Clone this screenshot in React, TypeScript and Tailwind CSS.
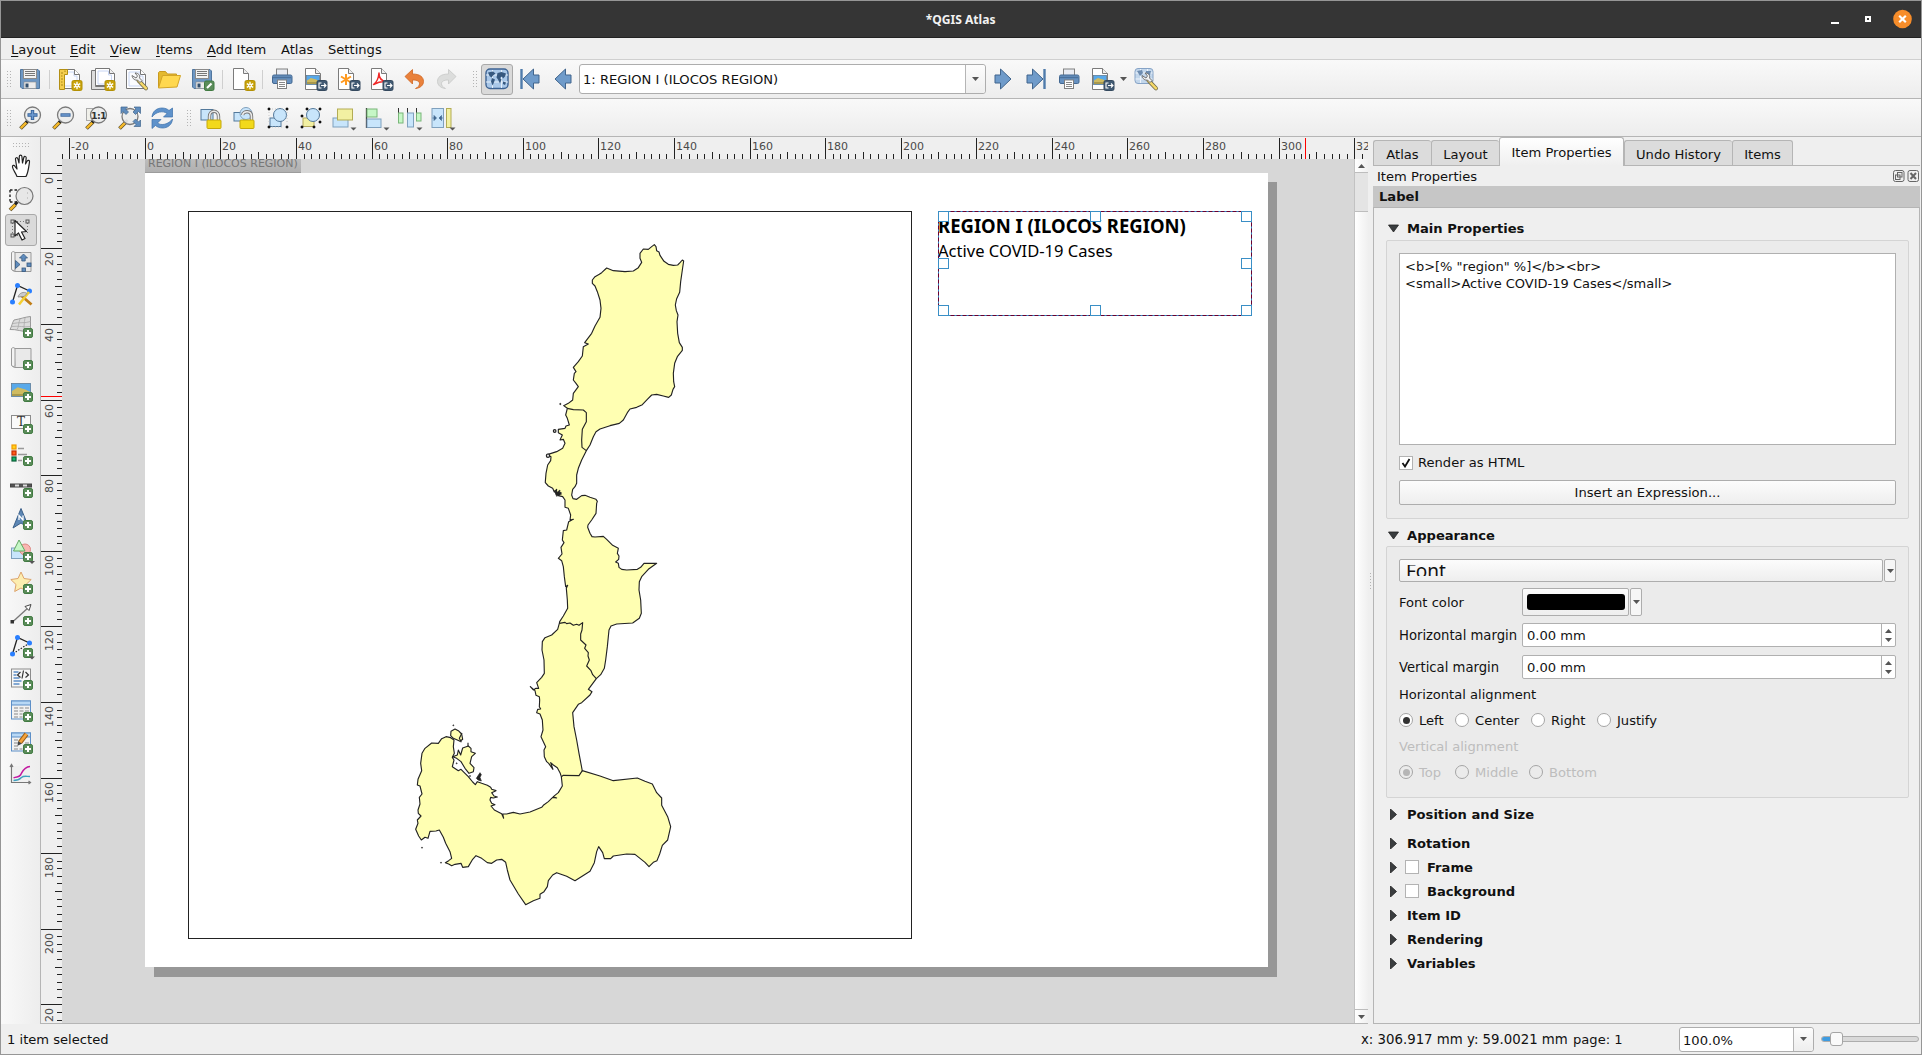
import type { ReactNode } from "react";

/* ---------- icon building blocks ---------- */

const Svg = ({ children, size = 24 }: { children: ReactNode; size?: number }) => (
  <svg width={size} height={size} viewBox="0 0 24 24" fill="none" className="block shrink-0 overflow-visible">
    {children}
  </svg>
);

const AddBadge = () => (
  <g>
    <rect x="14.500" y="14.500" width="9" height="9" rx="1.600" fill="#5b8c5a" stroke="#3f7a40" />
    <path d="M19 16v6M16 19h6" stroke="#fff" strokeWidth="2" />
  </g>
);
const StarBadge = () => (
  <g>
    <rect x="14" y="13.500" width="10" height="10" rx="1.600" fill="#c8a30a" stroke="#b39004" />
    <path d="M19 14.800v7.400M15.800 16.600l6.400 3.800M22.200 16.600l-6.400 3.800" stroke="#fff" strokeWidth="1.300" />
    <circle cx="19" cy="18.500" r="1.900" fill="#fff" />
    <circle cx="19" cy="18.500" r="0.800" fill="#c8a30a" />
  </g>
);
const ExportBadge = () => (
  <g>
    <rect x="14" y="13.500" width="10" height="10" rx="1.600" fill="#415a73" stroke="#34495e" />
    <path d="M18.500 16h-2.500v5h2.500M18 18.500h5M21 16.500l2 2-2 2" stroke="#fff" strokeWidth="1.100" />
  </g>
);
const Sheet = () => (
  <g>
    <path d="M2.500 1.500h10l5 5v16h-15z" fill="#fff" stroke="#7b7b7b" />
    <path d="M12.500 1.500v5h5" fill="#eee" stroke="#7b7b7b" />
  </g>
);
const Frame = () => (
  <g>
    <path d="M2.500 2.500h14l5 5v14h-19z" fill="#fff" stroke="#777" />
    <path d="M5 5h11v4h3v10H5z" fill="#fbfcff" stroke="#c8d6f4" />
    <path d="M16.500 2.500v5h5" fill="#fff" stroke="#777" />
  </g>
);
const Floppy = () => (
  <g>
    <path d="M2.500 2.500h17.500l1.500 1.500v17.500h-17.500l-1.500-1.500z" fill="#6d97c4" stroke="#51779f" />
    <rect x="5.500" y="2.500" width="13" height="9" fill="#f2f2f2" stroke="#8a8a8a" />
    <path d="M7 4.500h10M7 6.500h10M7 8.500h10" stroke="#777" />
    <rect x="6" y="15" width="12" height="6.500" fill="#ececec" stroke="#8a8a8a" strokeWidth=".6" />
    <rect x="7.500" y="16.500" width="3" height="4" fill="#34506e" />
  </g>
);
const Wrench = () => (
  <g>
    <path d="M14.500 13.500l7.500 7.800" stroke="#6f6a4c" strokeWidth="4" strokeLinecap="round" />
    <path d="M14.500 13.500l7.500 7.800" stroke="#f6d968" strokeWidth="2.500" strokeLinecap="round" />
    <path d="M8 8.500c.5 3.500 3 5 5.500 4.500l2.500 2.500 2-2-2.500-2.500c.8-2.500-.8-5-4.500-5l2.500 3-1.500 2z" fill="#f1f1f1" stroke="#666" strokeWidth=".9" />
  </g>
);
const Printer = () => (
  <g>
    <rect x="6.500" y="2" width="11" height="7" fill="#e9ecf3" stroke="#808080" />
    <rect x="2.500" y="8" width="19.500" height="8.500" rx="1.500" fill="#6791c0" stroke="#436892" />
    <path d="M3 10.500h18" stroke="#4a719d" strokeWidth="1.500" />
    <rect x="7.500" y="13" width="9" height="8.500" fill="#fff" stroke="#808080" />
    <path d="M9 15.500h6M9 17.500h6M9 19.500h6" stroke="#888" />
  </g>
);
const Picture = ({ x = 2, y = 7, w = 17, h = 11 }: { x?: number; y?: number; w?: number; h?: number }) => (
  <g>
    <rect x={x + 0.5} y={y + 0.5} width={w} height={h} fill="#58a9ea" stroke="#5d7d99" strokeWidth=".8" />
    <path
      d={`M${x + 1} ${y + h * 0.62}l${w * 0.3} ${-h * 0.3}l${w * 0.4} ${h * 0.18}l${w * 0.27} ${h * 0.2}v${h * 0.3}h${-w * 0.97}z`}
      fill="#cfbb60"
    />
    <path d={`M${x + 1} ${y + h - 1}h${w - 1}`} stroke="#8f8440" strokeWidth="1.200" />
  </g>
);
const Lens = ({ cx = 14.5, cy = 9 }: { cx?: number; cy?: number }) => (
  <g>
    <path d="M2.500 22.500l7-7" stroke="#54492b" strokeWidth="3.800" />
    <path d="M2.800 22.200l6-6" stroke="#f6b929" strokeWidth="2.400" />
    <path d="M8 16.500l2.500-2.500" stroke="#222" strokeWidth="3" />
    <circle cx={cx} cy={cy} r="8" fill="#eceded" fillOpacity=".92" stroke="#7a7a7a" strokeWidth="1.300" />
  </g>
);
const Roll = () => (
  <g>
    <path d="M5 2.500h17v19H6z" fill="#e9e9e9" stroke="#999" />
    <path d="M2.500 2.500c1.500-1.500 3.500-1 3.500.5v16c0 2-3.500 2-3.500 0z" fill="#f3f3f3" stroke="#999" />
    <path d="M3 19.500c1 2 3 2 5 2" stroke="#999" />
  </g>
);
const NodeLines = ({ dashed = true }: { dashed?: boolean }) => (
  <g>
    <path d="M3.500 20L8.500 3.500L20.500 9" stroke="#222" strokeWidth="1.300" />
    {dashed && <path d="M20.500 9L3.500 20" stroke="#222" strokeWidth="1.200" strokeDasharray="1.500 1.500" />}
    <circle cx="8.500" cy="3.500" r="2.500" fill="#2a7fff" />
    <circle cx="20.500" cy="9" r="2.500" fill="#2a7fff" />
    <circle cx="3.500" cy="20" r="2.500" fill="#2a7fff" />
  </g>
);
const MenuTick = ({ x = 23, y = 22.5 }: { x?: number; y?: number }) => (
  <path d={`M${x - 3} ${y - 1}h6l-3 3z`} fill="#555" />
);
const Globe = () => (
  <g>
    <rect x="1" y="2" width="22" height="19.500" rx="4" fill="#a9c7e8" stroke="#3c6292" strokeWidth="1.400" />
    <path d="M1 8h22M1 15h22M7.500 3v18M16.500 3v18" stroke="#e4effa" strokeWidth="1" />
    <path
      d="M3 5.500l5-1 2.500 2-2.500 2-1.500 2-2-1.500zM7 11l3 1.500-1.500 4-1 2-1.500-4zM12.500 6l4-1 4.500 1.500-1 3-2 2-1-2-2 1.500 1.500 1.500-1.500 4-2-4-1.500-2zM18 14.500l3 1-1 2.500-2-1z"
      fill="#36587f"
    />
  </g>
);
const ArrowL = () => <path d="M2 12L12.500 2v6h5.500v8h-5.500v6z" fill="#6f9bca" stroke="#41658d" strokeLinejoin="round" />;

const icons: Record<string, ReactNode> = {
  save: <Floppy />,
  newLayout: (
    <g>
      <Frame />
      <path d="M1.500 2.500h8v5H6.500v15h-5z" fill="#f4cd4d" stroke="#b38f14" />
      <path d="M3 6h2M3 9h1.500M3 12h2M3 15h1.500M3 18h2M7 3.500v1.500" stroke="#98770c" strokeWidth=".8" />
      <StarBadge />
    </g>
  ),
  duplicate: (
    <g>
      <path d="M.5 3.500h4v16h12v3H.5z" fill="#ddd" stroke="#777" />
      <path d="M4.500 1.500h14l5 5v12h-19z" fill="#fff" stroke="#777" />
      <path d="M7 4h10.500v4h3v9H7z" stroke="#c8d6f4" />
      <path d="M18.500 1.500v5h5" fill="#eee" stroke="#777" />
      <StarBadge />
    </g>
  ),
  manager: (
    <g>
      <Frame />
      <Wrench />
    </g>
  ),
  open: (
    <g>
      <path d="M1.500 20.500v-15l1-1h6l2 2.500h9v4" fill="#e4b92e" stroke="#c99a20" />
      <path d="M1.500 21L5.500 8.500H23.500L20 20z" fill="#ffd84f" stroke="#d3a527" strokeLinejoin="round" />
    </g>
  ),
  saveAs: (
    <g>
      <Floppy />
      <rect x="14.500" y="14" width="9.500" height="9.500" rx="1.600" fill="#5b8c5a" stroke="#3f7a40" />
      <path d="M17 21l4.500-4.500" stroke="#fff" strokeWidth="2.200" />
    </g>
  ),
  addPage: (
    <g>
      <Sheet />
      <StarBadge />
    </g>
  ),
  print: <Printer />,
  exportImage: (
    <g>
      <Sheet />
      <Picture x={3} y={8} w={13} h={9} />
      <ExportBadge />
    </g>
  ),
  exportSvg: (
    <g>
      <Sheet />
      <path d="M10 7v11M5 9.500l10 6M15 9.500l-10 6" stroke="#ff9a1f" strokeWidth="2" />
      <ExportBadge />
    </g>
  ),
  exportPdf: (
    <g>
      <Sheet />
      <path d="M4.500 17.500c3-2 5-6 5.500-11.500 0 6 2.500 8 7 8.500-5-.5-8 .5-12.500 3z" stroke="#f02a2a" strokeWidth="1.500" strokeLinejoin="round" />
      <ExportBadge />
    </g>
  ),
  undo: <path d="M3 9.500L10.500 2.500v4.500c8 0 11 3.500 11 7.500 0 3.500-3 6.500-8 7 3-1.500 4-3 4-4.800 0-2.200-2-3.700-7-3.700v4z" fill="#e9813b" stroke="#cf6420" strokeWidth=".8" />,
  redo: <path d="M21 9.500L13.500 2.500v4.500c-8 0-11 3.500-11 7.500 0 3.500 3 6.500 8 7-3-1.500-4-3-4-4.800 0-2.200 2-3.700 7-3.700v4z" fill="#dcdddc" stroke="#c6c8c6" strokeWidth=".8" />,
  globe: <Globe />,
  first: (
    <g transform="translate(3 0)">
      <path d="M.5 2v20" stroke="#4f7bab" strokeWidth="2.400" />
      <ArrowL />
    </g>
  ),
  prev: (
    <g transform="translate(2 0)">
      <ArrowL />
    </g>
  ),
  next: (
    <g transform="translate(22 0) scale(-1 1)">
      <ArrowL />
    </g>
  ),
  last: (
    <g transform="translate(21 0) scale(-1 1)">
      <path d="M.5 2v20" stroke="#4f7bab" strokeWidth="2.400" />
      <ArrowL />
    </g>
  ),
  atlasSettings: (
    <g>
      <rect x="1" y="1.500" width="18" height="15" rx="3" fill="#c3d7ec" stroke="#86a3c6" />
      <path d="M1.500 6h17M1.500 12h17M6.500 2v14M13.500 2v14" stroke="#eef4fb" />
      <path d="M3 4l5-1 1 3-3 3zM12 4l5 0-1 4-4 0z" fill="#6d8cb0" />
      <Wrench />
    </g>
  ),
  zoomIn: (
    <g>
      <Lens />
      <path d="M14.500 4v10M9.500 9h10" stroke="#33609a" strokeWidth="3.400" />
      <path d="M14.500 4.800v8.400M10.300 9h8.400" stroke="#6f9bd0" strokeWidth="1.600" />
    </g>
  ),
  zoomOut: (
    <g>
      <Lens />
      <path d="M9.500 9h10" stroke="#33609a" strokeWidth="3.400" />
      <path d="M10.300 9h8.400" stroke="#6f9bd0" strokeWidth="1.600" />
    </g>
  ),
  zoomActual: (
    <g>
      <rect x="2.500" y="2.500" width="12" height="12" fill="#f0f0ea" stroke="#aaa" />
      <Lens />
      <text x="14.500" y="12.600" fontSize="9.500" fontWeight="700" fill="#333" textAnchor="middle" fontFamily="DejaVu Sans, sans-serif" letterSpacing="-.7">
        1:1
      </text>
    </g>
  ),
  zoomFull: (
    <g>
      <Lens cx={13} cy={10.5} />
      <path d="M4 1h6.500l-2 2 3 3-2.500 2.500-3-3-2 2zM23.500 1v6.500l-2-2-3 3L16 6l3-3-2-2zM23.500 20.500h-6.500l2-2-3-3 2.500-2.500 3 3 2-2z" fill="#5f8cbd" stroke="#41658d" strokeWidth=".7" />
    </g>
  ),
  refresh: (
    <g fill="#5e92cb" stroke="#3a6ea9" strokeWidth=".7">
      <path d="M2 11C2.500 5 7 2 12 2c3 0 5.500 1 7 2.500L22.500 2v9h-9l3.500-3.500C13.500 4.500 6 5.500 2 11z" />
      <path d="M22.500 13c-.5 6-5 9-10 9-3 0-5.500-1-7-2.500L2 22.500v-9h9L7.500 17c3.500 3 11 1.500 15-4z" />
    </g>
  ),
  lock: (
    <g>
      <rect x="1" y="3.500" width="12" height="10.500" fill="#c8e5fb" stroke="#53799b" />
      <path d="M9.500 14.500v-4c0-7 9-7 9 0v4" stroke="#777" strokeWidth="3.400" />
      <path d="M9.500 14.500v-4c0-7 9-7 9 0v4" stroke="#eaeaea" strokeWidth="1.600" />
      <rect x="7" y="14" width="14" height="8.500" rx="1" fill="#f2d91b" stroke="#c4a80d" />
    </g>
  ),
  unlock: (
    <g>
      <rect x="1" y="6.500" width="10" height="8.500" fill="#c8e5fb" stroke="#53799b" />
      <circle cx="13" cy="7.500" r="6" fill="#c8e5fb" stroke="#7fa0bd" />
      <path d="M18.500 14.500v-4c0-6-8-6-9-1.500" stroke="#777" strokeWidth="3.400" />
      <path d="M18.500 14.500v-4c0-6-8-6-9-1.500" stroke="#eaeaea" strokeWidth="1.600" />
      <rect x="7" y="14" width="14" height="8.500" rx="1" fill="#f2d91b" stroke="#c4a80d" />
    </g>
  ),
  group: (
    <g>
      <rect x="4" y="12" width="11" height="8.500" fill="#c8e5fb" stroke="#53799b" />
      <circle cx="14" cy="9" r="6.500" fill="#c8e5fb" stroke="#53799b" />
      <path d="M2 2h2v2H2zM20 2h2v2h-2zM2 20h2v2H2zM20 20h2v2h-2z" fill="#111" stroke="#111" strokeWidth=".6" />
      <path d="M6 3h12M3 6v12M21 6v12M6 21h12" stroke="#bbb" strokeWidth=".8" strokeDasharray="1 2" />
    </g>
  ),
  ungroup: (
    <g>
      <rect x="4" y="12" width="11" height="8.500" fill="#f2f0a2" stroke="#b3a85e" />
      <circle cx="14" cy="9" r="6.500" fill="#c8e5fb" stroke="#53799b" />
      <path d="M7 2h2v2H7zM20 2h2v2h-2zM2 9h2v2H2zM2 20h2v2H2zM14 20h2v2h-2zM20 15h2v2h-2z" fill="#111" stroke="#111" strokeWidth=".6" />
    </g>
  ),
  raise: (
    <g>
      <rect x="1" y="12" width="15" height="9" fill="#c8e5fb" stroke="#7fa0bd" />
      <rect x="5.500" y="3" width="15" height="11" fill="#f2f0a2" stroke="#b3ac55" />
      <MenuTick x={21.5} />
    </g>
  ),
  align: (
    <g>
      <path d="M1.500 2v20" stroke="#333" strokeWidth="1.300" />
      <rect x="2" y="3" width="10" height="8" fill="#c6f7c6" stroke="#79b679" />
      <rect x="2" y="13" width="14" height="8.500" fill="#c8e5fb" stroke="#7fa0bd" />
      <MenuTick x={21.5} />
    </g>
  ),
  distribute: (
    <g>
      <path d="M.5 2v5M9.500 2v5M18.500 2v5" stroke="#333" />
      <rect x=".5" y="7" width="4.500" height="10" fill="#c6f7c6" stroke="#79b679" />
      <rect x="9.500" y="7" width="6" height="14" fill="#c8e5fb" stroke="#7fa0bd" />
      <rect x="18.500" y="7" width="4.500" height="8" fill="#c6f7c6" stroke="#79b679" />
      <MenuTick x={21.5} />
    </g>
  ),
  resize: (
    <g>
      <rect x="1" y="2.500" width="11.500" height="19" fill="#c8e5fb" stroke="#7fa0bd" />
      <path d="M1.500 12h3M12 12H9M3 9.500L5.500 12 3 14.500zM10.500 9.500L8 12l2.500 2.500z" fill="#42688f" stroke="#42688f" strokeWidth=".7" />
      <rect x="15.500" y="2.500" width="4.500" height="19" fill="#f2f0a2" stroke="#b3ac55" />
      <MenuTick x={21.5} />
    </g>
  ),
  pan: (
    <path
      d="M8 22.500c-1.500-4-4-6.500-4.500-9.500-.3-1.700 1.500-2.300 2.500-.7l2 2.700L6.500 5.500c-.4-2 1.800-2.500 2.400-.6L10 9l.3-6.500c.1-1.800 2.400-1.800 2.600 0L13.500 9l1.300-5.500c.5-1.600 2.600-1.300 2.400.5L16.500 10l1.700-3c.8-1.300 2.600-.6 2.300 1-.7 4-1 10-3.500 14.500z"
      fill="#fff"
      stroke="#222"
      strokeWidth="1.200"
      strokeLinejoin="round"
    />
  ),
  zoomTool: (
    <g>
      <path d="M1 4h10M1 16h8M1 4v12" stroke="#222" strokeWidth="1.400" strokeDasharray="2.500 2" />
      <path d="M1 24l5.500-5.500" stroke="#54492b" strokeWidth="3.800" />
      <path d="M1.300 23.700l5-5" stroke="#f6b929" strokeWidth="2.400" />
      <path d="M6 18.500l2.500-2.500" stroke="#222" strokeWidth="2.800" />
      <circle cx="15.500" cy="10" r="8.500" fill="#e6e6e6" fillOpacity=".95" stroke="#777" strokeWidth="1.200" />
      <path d="M18 7h2M18 12h2" stroke="#aaa" strokeDasharray="1 1" />
    </g>
  ),
  select: (
    <g>
      <path d="M5 3.500h12M3.500 5v11M5 17.500h12M18.500 5v11" stroke="#777" strokeDasharray="1 2" />
      <rect x="2" y="2" width="3" height="3" stroke="#555" />
      <rect x="17" y="2" width="3" height="3" stroke="#555" />
      <rect x="2" y="16" width="3" height="3" stroke="#555" />
      <path d="M6 2.500v15.500l3.500-3 3.500 7 3-1.500-3.500-6.500 5-.5z" fill="#fff" stroke="#222" strokeWidth="1.200" strokeLinejoin="round" />
    </g>
  ),
  moveContent: (
    <g>
      <Roll />
      <g fill="#5f8cbd" stroke="#36587f" strokeWidth=".8">
        <path d="M14.500 4l4 4h-2.300v3h-3.400V8h-2.300z" />
        <path d="M6.500 10.500l4.500 4-4.500 4z" />
        <rect x="18" y="13" width="4" height="3.500" />
        <rect x="13" y="18" width="3.500" height="3.500" />
      </g>
    </g>
  ),
  editNodes: (
    <g>
      <NodeLines dashed={false} />
      <path d="M11 12.500l11.500 10" stroke="#c07d16" strokeWidth="2.800" />
      <path d="M20 10L10 22.500" stroke="#f4cf31" strokeWidth="2.500" />
      <path d="M9 15c1-4 6-6 9-3.500l-3 3z" fill="#ccc" stroke="#888" strokeWidth=".8" />
    </g>
  ),
  map3d: (
    <g>
      <path d="M5 6C11 5 16 3 21.500 2.500v15.500C14 18 7 15 1 15.500 3 12 3 9 5 6z" fill="#dcdcdc" stroke="#999" />
      <path d="M11 5c-2 5-1 8-3 10.500M16 4c-1 5-1 9-1 13M4 9.500c6-1.500 12 0 17.500-2M3 12.500c7-1 12 1 18.500 0" stroke="#aaa" strokeWidth=".8" />
      <AddBadge />
    </g>
  ),
  addMap: (
    <g>
      <Roll />
      <AddBadge />
    </g>
  ),
  addPicture: (
    <g>
      <Picture x={2} y={5} w={19} h={13} />
      <AddBadge />
    </g>
  ),
  addLabel: (
    <g>
      <rect x="2.500" y="5.500" width="19" height="13" fill="#fafafa" stroke="#8c8c8c" />
      <text x="12" y="16.200" fontSize="12" fontFamily="DejaVu Serif, serif" fill="#333" textAnchor="middle">
        T
      </text>
      <AddBadge />
    </g>
  ),
  addLegend: (
    <g>
      <path d="M9 6.500h6M9 12.500h9M9 18.500h4" stroke="#999" strokeWidth="1.600" />
      <rect x="3" y="3" width="4" height="4" fill="#ffd21c" stroke="#f29a00" strokeWidth="1.200" />
      <rect x="3" y="9" width="4" height="4" fill="#ff5a1c" stroke="#c32e00" strokeWidth="1.200" />
      <rect x="3" y="15" width="4" height="4" fill="#12b86b" stroke="#0b5c36" strokeWidth="1.200" />
      <AddBadge />
    </g>
  ),
  addScale: (
    <g>
      <rect x="1.500" y="10" width="21" height="3" fill="#555" stroke="#444" />
      <path d="M6 11.500h4M14 11.500h4" stroke="#ddd" strokeWidth="1.800" />
      <AddBadge />
    </g>
  ),
  addNorth: (
    <g>
      <path d="M12 2.500L20 22l-8-5-8 5z" fill="#5d87b5" stroke="#3a5f88" />
      <path d="M10 14V9.500l4 4.500V9.500" stroke="#fff" strokeWidth="1.300" />
      <AddBadge />
    </g>
  ),
  addShape: (
    <g>
      <rect x="2.500" y="10" width="15" height="10.500" fill="#c8e5fb" stroke="#7fa0bd" />
      <circle cx="16" cy="11.500" r="5.500" fill="#f9b7b2" stroke="#dd8883" />
      <path d="M10 2l6 11H4.500z" fill="#c6f7c6" stroke="#63a863" />
      <AddBadge />
      <MenuTick x={23} y={24} />
    </g>
  ),
  addMarker: (
    <g>
      <path d="M12 2l3 6.500 7.200 1-5.200 5 1.300 7L12 18l-6.300 3.500 1.300-7-5.200-5 7.200-1z" fill="#fdeeb0" stroke="#dda36a" strokeLinejoin="round" />
      <AddBadge />
    </g>
  ),
  addArrow: (
    <g>
      <path d="M3.500 20L20 5" stroke="#777" strokeWidth="1.300" />
      <rect x="2" y="18.500" width="2.500" height="2.500" fill="#333" stroke="#333" />
      <path d="M22 2.500l-2 6-4-4z" fill="#fff" stroke="#444" />
      <AddBadge />
    </g>
  ),
  addNode: (
    <g>
      <NodeLines />
      <AddBadge />
      <MenuTick x={23} y={23.5} />
    </g>
  ),
  addHtml: (
    <g>
      <rect x="2.500" y="3" width="19" height="18" fill="#f7f7f7" stroke="#8c8c8c" />
      <path d="M4.500 6h5M4.500 9h3M4.500 12h6M4.500 15h8M4.500 18h6" stroke="#5d8fc7" strokeWidth="1.400" />
      <path d="M11.500 6L8.500 9l3 2.500M14.500 4.500l-1.500 8M16.500 6l3 3-3 2.500" stroke="#333" strokeWidth="1.200" />
      <AddBadge />
    </g>
  ),
  addTable: (
    <g>
      <rect x="2.500" y="3" width="19" height="18" fill="#f2f2f2" stroke="#5d8fc7" />
      <rect x="2.500" y="3" width="19" height="4" fill="#b8d8f5" stroke="#5d8fc7" />
      <path d="M5 10h4M10.500 10h4M16 10h4M5 13h4M10.500 13h4M16 13h4M5 16h4M10.500 16h3M5 19h4M10.500 19h3" stroke="#888" />
      <AddBadge />
    </g>
  ),
  addFixedTable: (
    <g>
      <rect x="2.500" y="3" width="19" height="18" fill="#f2f2f2" stroke="#5d8fc7" />
      <rect x="2.500" y="3" width="19" height="4" fill="#b8d8f5" stroke="#5d8fc7" />
      <path d="M5 10h4M5 13h4M5 16h4M5 19h4M10.500 19h3M16 13h4" stroke="#888" />
      <path d="M17.500 4L11 12.500" stroke="#9a5d16" strokeWidth="4.600" />
      <path d="M17.500 4L11 12.500" stroke="#f5a33b" strokeWidth="2.800" />
      <path d="M9.200 11l3.600 2.800-4.300 2z" fill="#444" />
      <AddBadge />
    </g>
  ),
  elevation: (
    <g>
      <rect x="4" y="4" width="17" height="16" fill="#f0f0f0" />
      <path d="M2.500 3v17.500H21M1 5l1.500-2.500L4 5M19.500 19l2 1.500-2 1.500" stroke="#777" strokeWidth="1.200" />
      <path d="M4.500 16c3-2 5 0 7-3s3-8 9.500-8.500" stroke="#c217a0" strokeWidth="1.500" />
      <path d="M4.500 18.500c4 0 6-1 8-3s5-1 8.500-1" stroke="#3fa0bf" strokeWidth="1.400" />
    </g>
  ),
};

const IconBtn = ({ name }: { name: string }) => (
  <div className="flex w-[33px] shrink-0 items-center justify-center">
    <Svg>{icons[name]}</Svg>
  </div>
);

const Handle = () => (
  <div className="h-[18px] w-[5px] shrink-0 bg-[radial-gradient(circle,#b4b4b4_0.7px,transparent_1px)] bg-[length:3px_3px]" />
);
const Sep = ({ wide = "w-[7px]" }: { wide?: string }) => (
  <div className={`flex h-[19px] shrink-0 justify-center ${wide}`}>
    <div className="w-px bg-[#cfcfcf]" />
  </div>
);
const Caret = ({ up = false }: { up?: boolean }) => (
  <svg width="7" height="4" viewBox="0 0 7 4" className="block">
    <path d={up ? "M0 4h7L3.500 0z" : "M0 0h7L3.500 4z"} fill="#555" />
  </svg>
);

/* ---------- rulers ---------- */

const MM = 3.7795;

const HRuler = () => {
  const ticks: number[] = [];
  for (let mm = -22; mm <= 322; mm += 2) ticks.push(mm);
  return (
    <svg width="1327" height="22" className="block">
      {ticks.map((mm) => {
        const x = Math.floor(104.3 + mm * MM) + 0.5;
        const major = mm % 20 === 0;
        const y = major ? 1 : mm % 10 === 0 ? 15 : 17;
        return (
          <g key={mm}>
            <path d={`M${x} ${y}V22`} stroke="#222" />
            {major && (
              <text x={x + 1.5} y="12.800" fontSize="11" fill="#4a4a4a">
                {mm}
              </text>
            )}
          </g>
        );
      })}
      <path d="M1264.500 1V22" stroke="#f00" />
    </svg>
  );
};

const VRuler = () => {
  const ticks: number[] = [];
  for (let mm = -2; mm <= 224; mm += 2) ticks.push(mm);
  return (
    <svg width="21" height="864" className="block shrink-0">
      {ticks.map((mm) => {
        const y = Math.floor(14.4 + mm * MM) + 0.5;
        const major = mm % 20 === 0;
        const x = major ? 0 : mm % 10 === 0 ? 14 : 16;
        return (
          <g key={mm}>
            <path d={`M${x} ${y}H21`} stroke="#222" />
            {major && (
              <text x="12" y={y + 3.5} fontSize="11" fill="#4a4a4a" textAnchor="end" transform={`rotate(-90 12 ${y + 3.5})`}>
                {mm}
              </text>
            )}
          </g>
        );
      })}
      <path d="M0 237.500H21" stroke="#f00" />
    </svg>
  );
};

/* ---------- map of the region ---------- */

const shift = (pts: string, dx: number, dy: number) =>
  pts
    .trim()
    .split(/\s+/)
    .map((p) => {
      const [x, y] = p.split(",").map(Number);
      return `${x + dx},${y + dy}`;
    })
    .join(" ");

const outline = [
  shift(
    "433,44 438,50 440,62 447,66 450,76 462,94 475,103 490,106 503,105 510,98 517,90 521,93 517,120 512,155 509,187 500,206 496,225 499,242 504,255 501,275 503,310 508,338 517,352 517,361 502,380 494,400 490,430 491,455 494,470 489,478 484,495 476,502 460,498 440,493 425,495 412,508 397,524 380,532 360,537 352,548 340,570 328,580 300,587 270,597 258,605 250,620 240,645 229,662 215,690 205,715 200,735 200,760 195,770 188,778 185,795 189,806 200,808 215,797 225,796 240,802 258,808 262,814",
    0,
    0,
  ),
  shift(
    "260,100 258,130 245,150 234,165 233,172 240,190 246,200 255,201 280,199 290,208 308,226 325,235 322,250 327,258 326,268 317,276 325,280 327,292 335,298 350,300 382,298 392,292 402,280 440,280 415,298 395,320 388,335 387,360 392,390 394,430 388,445 368,459 320,462 303,468 297,480 292,530 287,570 283,595 272,614 259,626 235,658 246,665 240,675 215,698 205,703 188,728 192,770 200,810 207,850 217,903",
    0,
    720,
  ),
  shift(
    "547,212 600,228 640,242 712,234 735,244 757,252 770,278 785,294 785,316 803,350 812,380 803,420 787,436 779,462 771,482 760,487 747,500 735,487 705,463 680,462 640,468 632,476 613,476 608,458 596,440 590,455 583,488 570,514 525,542 500,529 470,518 458,525 445,542 442,560 432,575 420,583 420,595 400,602 377,614 355,582 330,540 322,510 317,487 305,478 290,480 275,490 262,488 245,475 228,467 218,478 205,500 188,502 183,490 165,493 155,497 146,492 136,488 146,482 155,475 150,455 137,430 130,412 118,390 108,393 90,394 84,415 75,412 64,420 56,408 47,388 54,370 52,360 63,348 55,340 54,330 60,312 58,292 66,282 60,258 52,255 54,238 65,212 62,190 66,160 75,145 95,129 115,130 125,116 138,110 152,113 162,120 160,140 163,160 157,172 162,180 157,200 175,212 183,208 195,220 205,230 218,246 226,254 232,245 245,250 262,256 272,262 275,268 288,272 275,278 282,288 292,291 280,294 272,292 270,300 275,310 285,314 273,318 283,330 305,341 311,355 308,342 320,342 340,337 360,342 390,336 425,322 430,316 445,305 458,292 470,294 460,290 475,278 487,258 484,230 480,218 472,203 460,195 452,188 459,208 446,190 440,185 433,170 432,150 437,140 430,125 423,110 429,90 427,60 420,42 410,38 413,28 422,27 418,20 419,0",
    -330,
    1410,
  ),
  shift(
    "88,680 78,676 75,662 61,650 70,660 78,655 86,655 80,638 95,622 103,610 102,570 96,540 97,515 105,503 125,495 143,478 148,460 149,455 160,438 173,415 172,390 169,355 173,346 167,350 163,320 160,290 155,272 145,265 156,252 153,232 162,218 157,210 160,182 170,180 176,155 190,148 180,150 182,135 175,115 165,112 165,90 158,80 145,77 153,68 138,72 140,58 133,66 128,55 115,48 106,38",
    0,
    720,
  ),
  shift(
    "106,755 108,730 113,705 122,692 123,680 112,674 140,665 158,655 165,640 160,628 150,630 157,615 145,608 145,598 165,595 168,588 178,585 172,565 167,555 172,535 161,527 175,520 188,510 190,490 205,470 198,460 190,450 193,430 198,425 190,412 205,395 217,378 220,350 235,342 224,338 245,310 255,288 270,262 273,235 270,210 262,185 255,168 247,160 247,150 255,140 268,133 275,128 290,114 310,122 345,125 370,123 385,113 395,97 390,85 390,70 400,57 415,58 425,50",
    0,
    0,
  ),
].join(" ");

const RegionMap = () => (
  <svg width="722" height="725" className="block">
    <g transform="translate(321 18) scale(.33333)" fill="#ffffb2" stroke="#222" strokeWidth="3.400" strokeLinejoin="round">
      <polygon points={outline} />
      <g fill="none">
        <polyline points="172,535 190,539 220,540 229,548 229,575 217,598 215,630 216,652 229,662" />
        <polyline points={shift("148,460 165,457 170,461 180,459 190,466 200,463 207,466 218,458 216,480 212,492 212,510 228,525 224,535 235,548 234,558 238,570 230,588 243,602 248,614 259,626", 0, 720)} />
        <polyline points={shift("484,230 490,226 537,227 547,212", -330, 1410)} />
      </g>
      <polygon points={shift("153,94 165,87 175,92 185,102 188,118 180,124 172,120 160,115 152,107", -330, 1410)} />
      <polygon points={shift("158,170 172,165 175,150 182,165 188,144 205,138 213,145 213,155 226,160 215,170 210,190 222,203 220,215 207,220 195,205 183,185 170,175", -330, 1410)} />
      <g fill="#222" strokeWidth="2">
        <polygon points={shift("229,235 240,218 244,224 240,232 244,243 234,240", -330, 1410)} />
        <polygon points="132,782 141,787 150,780 149,789 155,792 146,795 140,799 137,791" />
        <circle cx="151" cy="522" r="2" />
        <circle cx="-170" cy="1486" r="1.500" />
        <circle cx="-264" cy="1853" r="1.500" />
        <circle cx="-207" cy="1898" r="1.500" />
        <circle cx="-160" cy="1600" r="1.500" />
        <circle cx="-120" cy="1638" r="1.500" />
      </g>
      <circle cx="134" cy="603" r="4" fill="#ddd" />
      <circle cx="114" cy="677" r="5" fill="#ddd" />
      <path d="M-144 1509l-8 16 6 12M-126 1538v12" fill="none" />
    </g>
  </svg>
);

const Canvas = () => {
  const grips = [
    "left-0 top-0",
    "left-[152px] top-0",
    "right-0 top-0",
    "left-0 top-[47px]",
    "right-0 top-[47px]",
    "left-0 bottom-0",
    "left-[152px] bottom-0",
    "right-0 bottom-0",
  ];
  return (
    <div className="relative h-[864px] w-[1292px] shrink-0 overflow-hidden bg-[#d7d7d7]">
      <div className="absolute left-[83px] top-0 h-[14px] w-[156px] overflow-hidden border-b border-[#9c9c9c] bg-linear-to-b from-[#bdbdbd] to-[#b0b0b0]">
        <div className="-mt-[2px] whitespace-nowrap pl-[3px] text-[11px] leading-[14px] text-[#777]">REGION I (ILOCOS REGION)</div>
      </div>
      <div className="absolute left-[92px] top-[23px] h-[795px] w-[1123px] bg-[#979797]" />
      <div className="absolute left-[83px] top-[14px] h-[794px] w-[1123px] bg-white">
        <div className="absolute left-[43px] top-[38px] h-[728px] w-[724px] border border-[#222]">
          <RegionMap />
        </div>
        <div className="absolute left-[793px] top-[38px] h-[105px] w-[314px]">
          <div className="flex flex-col items-start whitespace-nowrap font-['Noto_Sans','Open_Sans',sans-serif] text-black">
            <div className="mt-[2px] origin-left scale-x-[.925] text-[20px] font-bold leading-[26px]">REGION I (ILOCOS REGION)</div>
            <div className="origin-left scale-x-[.973] text-[17px] leading-[23px]">Active COVID-19 Cases</div>
          </div>
          <svg width="314" height="105" className="absolute left-0 top-0">
            <rect x=".5" y=".5" width="313" height="104" fill="none" stroke="#2f8fc9" />
            <rect x=".5" y=".5" width="313" height="104" fill="none" stroke="#6b0030" strokeDasharray="4 2" />
          </svg>
          {grips.map((g) => (
            <div key={g} className={`absolute h-[11px] w-[11px] border border-[#3a8fc6] bg-white ${g}`} />
          ))}
        </div>
      </div>
    </div>
  );
};

/* ---------- item properties panel ---------- */

const Tri = ({ open }: { open?: boolean }) => (
  <div className="flex w-[12px] shrink-0 justify-center">
    <svg width="11" height="11" viewBox="0 0 11 11" className="block">
      <path d={open ? "M.5 2h10L5.500 9z" : "M2.500 0v11l6-5.500z"} fill="#3a3d3f" stroke="#222" strokeWidth=".8" />
    </svg>
  </div>
);
const CheckBox = ({ checked = false }: { checked?: boolean }) => (
  <div className="flex h-[14px] w-[14px] shrink-0 items-center justify-center border border-[#b3b3b3] bg-white">
    {checked && (
      <svg width="10" height="10" viewBox="0 0 10 10">
        <path d="M1.500 5l2.500 3.500L8.500 1" fill="none" stroke="#111" strokeWidth="1.800" />
      </svg>
    )}
  </div>
);
const Radio = ({ label, on, w, dim }: { label: string; on?: boolean; w: string; dim?: boolean }) => (
  <div className={`flex items-center ${w}`}>
    <div className={`flex h-[14px] w-[14px] shrink-0 items-center justify-center rounded-full border border-[#a5a5a5] ${dim ? "" : "bg-white"}`}>
      {on && <div className={`h-[7px] w-[7px] rounded-full ${dim ? "bg-[#b5b5b5]" : "bg-[#333]"}`} />}
    </div>
    <span className="pl-[6px] pt-px">{label}</span>
  </div>
);
const Spin = ({ label }: { label: string }) => (
  <div className="flex h-[24px] items-center">
    <div className="w-[123px] shrink-0 pt-px text-[13.2px]">{label}</div>
    <div className="flex h-full grow rounded-[2px] border border-[#b0b0b0] bg-white">
      <div className="grow pl-[4px] leading-[24px]">0.00 mm</div>
      <div className="flex w-[14px] flex-col items-center justify-center gap-[5px] border-l border-[#b0b0b0]">
        <Caret up />
        <Caret />
      </div>
    </div>
  </div>
);
const Section = ({ title, check, h = "h-[24px]", open }: { title: string; check?: boolean; h?: string; open?: boolean }) => (
  <div className={`flex shrink-0 items-center pl-[13px] font-bold ${h}`}>
    <Tri open={open} />
    {check && (
      <div className="ml-[6px]">
        <CheckBox />
      </div>
    )}
    <span className="ml-[8px] pt-px">{title}</span>
  </div>
);

const tabs = [
  { t: "Atlas", w: "w-[58px]" },
  { t: "Layout", w: "w-[68px]" },
  { t: "Item Properties", w: "w-[125px]" },
  { t: "Undo History", w: "w-[108px]" },
  { t: "Items", w: "w-[61px]" },
];

const Panel = () => (
  <div className="flex h-full w-[547px] shrink-0 flex-col">
    <div className="flex h-[29px] shrink-0 items-end border-b border-[#b5b5b5]">
      {tabs.map(({ t, w }) =>
        t === "Item Properties" ? (
          <div key={t} className={`-mb-px h-[29px] rounded-t-[3px] border border-b-0 border-[#b5b5b5] bg-linear-to-b from-white to-[#efefef] text-center leading-[30px] ${w}`}>
            {t}
          </div>
        ) : (
          <div key={t} className={`h-[25px] rounded-t-[3px] border-l border-t border-[#b5b5b5] bg-[#dcdcdc] text-center leading-[27px] last:border-r ${w}`}>
            {t}
          </div>
        ),
      )}
    </div>
    <div className="flex h-[20px] shrink-0 items-center pl-[4px]">
      <span className="grow pt-[2px] leading-[20px]">Item Properties</span>
      <svg width="27" height="12" viewBox="0 0 27 12" fill="none" className="block" stroke="#666">
        <rect x=".5" y=".5" width="10.500" height="11" rx="2" />
        <rect x="4.500" y="2.500" width="4.500" height="4.500" />
        <rect x="2.500" y="5" width="4.500" height="4.500" />
        <rect x="15" y=".5" width="10.500" height="11" rx="2" />
        <path d="M17.500 3l5.500 6M23 3l-5.500 6" strokeWidth="2" />
      </svg>
    </div>
    <div className="h-[21px] shrink-0 bg-[#c6c6c6] pl-[6px] font-bold leading-[22px]">Label</div>
    <div className="flex min-h-0 grow flex-col border border-[#b5b5b5]">
      <Section title="Main Properties" open h="h-[32px] pt-[9px]" />
      <div className="ml-[12px] flex h-[279px] w-[523px] shrink-0 flex-col rounded-[2px] border border-[#d4d4d4] bg-[#ebebeb] px-[12px] pt-[12px]">
        <div className="h-[192px] border border-[#b0b0b0] bg-white pl-[5px] pt-[4px] text-[13px] leading-[17px]">
          <div>{'<b>[% "region" %]</b><br>'}</div>
          <div>{"<small>Active COVID-19 Cases</small>"}</div>
        </div>
        <div className="mt-[10px] flex h-[16px] items-center gap-[5px]">
          <CheckBox checked />
          <span>Render as HTML</span>
        </div>
        <div className="mt-[9px] h-[25px] rounded-[2px] border border-[#adadad] bg-linear-to-b from-[#fcfcfc] to-[#eeeeee] text-center leading-[24px]">
          Insert an Expression...
        </div>
      </div>
      <Section title="Appearance" open h="h-[27px] pt-[6px]" />
      <div className="ml-[12px] flex h-[252px] w-[523px] shrink-0 flex-col rounded-[2px] border border-[#d4d4d4] bg-[#ebebeb] px-[12px] pt-[12px]">
        <div className="flex h-[23px] gap-px">
          <div className="grow rounded-[2px] border border-[#adadad] bg-linear-to-b from-[#fcfcfc] to-[#eeeeee] pl-[6px] pt-[5px]">
            <div className="h-[11px] overflow-hidden">
              <div className="-mt-[6px] font-['Noto_Sans',sans-serif] text-[19px] leading-[24px]">Font</div>
            </div>
          </div>
          <div className="flex w-[12px] items-center justify-center rounded-[2px] border border-[#adadad] bg-[#f6f6f6]">
            <Caret />
          </div>
        </div>
        <div className="mt-[6px] flex h-[28px] items-center">
          <div className="w-[123px] pt-px">Font color</div>
          <div className="flex h-full w-[107px] items-center justify-center rounded-[2px] border border-[#adadad] bg-linear-to-b from-[#fcfcfc] to-[#eeeeee]">
            <div className="h-[16px] w-[98px] rounded-[3px] bg-black" />
          </div>
          <div className="ml-px flex h-full w-[12px] items-center justify-center rounded-[2px] border border-[#adadad] bg-[#f6f6f6]">
            <Caret />
          </div>
        </div>
        <div className="mt-[7px]">
          <Spin label="Horizontal margin" />
        </div>
        <div className="mt-[8px]">
          <Spin label="Vertical margin" />
        </div>
        <div className="mt-[7px] leading-[18px]">Horizontal alignment</div>
        <div className="mt-[8px] flex h-[16px] items-center">
          <Radio label="Left" on w="w-[56px]" />
          <Radio label="Center" w="w-[76px]" />
          <Radio label="Right" w="w-[66px]" />
          <Radio label="Justify" w="w-[80px]" />
        </div>
        <div className="mt-[10px] leading-[18px] text-[#bdbdbd]">Vertical alignment</div>
        <div className="mt-[8px] flex h-[16px] items-center text-[#bdbdbd]">
          <Radio label="Top" on dim w="w-[56px]" />
          <Radio label="Middle" dim w="w-[74px]" />
          <Radio label="Bottom" dim w="w-[80px]" />
        </div>
      </div>
      <Section title="Position and Size" h="mt-[3px] h-[26px]" />
      <Section title="Rotation" h="mt-[4px] h-[24px]" />
      <Section title="Frame" check />
      <Section title="Background" check />
      <Section title="Item ID" />
      <Section title="Rendering" />
      <Section title="Variables" />
    </div>
  </div>
);

/* ---------- window ---------- */

const menus = ["Layout", "Edit", "View", "Items", "Add Item", "Atlas", "Settings"];
const menuPos = ["w-[59px]", "w-[40px]", "w-[46px]", "w-[51px]", "w-[74px]", "w-[47px]", "w-[60px]"];

const leftTools = [
  "pan", "zoomTool", "select", "moveContent", "editNodes", "map3d", "addMap", "addPicture", "addLabel", "addLegend",
  "addScale", "addNorth", "addShape", "addMarker", "addArrow", "addNode", "addHtml", "addTable", "addFixedTable", "elevation",
];

const barStyle = "flex shrink-0 items-center border-b border-[#b5b5b5] bg-linear-to-b from-[#f9f9f9] to-[#ededed]";

export default function App() {
  return (
    <div className="flex h-[1055px] w-[1922px] flex-col overflow-hidden border border-[#969696] bg-[#efefef] font-['DejaVu_Sans',sans-serif] text-[13.1px] text-[#111]">
      <div className="relative flex h-[37px] shrink-0 items-center justify-center border-b border-[#222] bg-[#353535]">
        <span className="scale-x-[.93] pt-[2px] font-['Noto_Sans',sans-serif] text-[13px] font-bold text-[#f2f2f2]">*QGIS Atlas</span>
        <svg width="92" height="24" viewBox="0 0 92 24" className="absolute right-px top-[6px]">
          <rect x="3" y="15" width="8" height="2" fill="#fff" />
          <rect x="38" y="10" width="4" height="4" fill="none" stroke="#fff" strokeWidth="2" />
          <circle cx="74.500" cy="12" r="9.300" fill="#f78d2a" />
          <path d="M71.200 8.700l6.600 6.600M77.800 8.700l-6.600 6.600" stroke="#fff" strokeWidth="2.200" />
        </svg>
      </div>
      <div className="flex h-[22px] shrink-0 items-center border-b border-[#cfcfcf] pl-[10px]">
        {menus.map((m, i) => (
          <div key={m} className={`whitespace-nowrap pt-px leading-[21px] ${menuPos[i]}`}>
            {i < 5 ? <span className="underline decoration-1 underline-offset-2">{m[0]}</span> : m[0]}
            {m.slice(1)}
          </div>
        ))}
      </div>
      <div className={`${barStyle} h-[39px]`}>
        <div className="w-[5px]" />
        <Handle />
        <div className="w-[2px]" />
        <IconBtn name="save" />
        <Sep />
        {["newLayout", "duplicate", "manager", "open", "saveAs"].map((n) => (
          <IconBtn key={n} name={n} />
        ))}
        <Sep wide="w-[8px]" />
        <IconBtn name="addPage" />
        <Sep wide="w-[6px]" />
        {["print", "exportImage", "exportSvg", "exportPdf", "undo", "redo"].map((n) => (
          <IconBtn key={n} name={n} />
        ))}
        <div className="w-[9px]" />
        <Handle />
        <div className="w-[4px]" />
        <div className="flex h-[31px] w-[32px] items-center justify-center rounded-[3px] border border-[#a9a9a9] bg-[#dadada]">
          <Svg>{icons.globe}</Svg>
        </div>
        <IconBtn name="first" />
        <IconBtn name="prev" />
        <div className="flex h-[30px] w-[407px] shrink-0 rounded-[3px] border border-[#adadad] bg-white">
          <div className="grow pl-[3px] leading-[29px]">1: REGION I (ILOCOS REGION)</div>
          <div className="flex w-[20px] items-center justify-center rounded-r-[3px] border-l border-[#b5b5b5] bg-linear-to-b from-[#fcfcfc] to-[#eeeeee]">
            <Caret />
          </div>
        </div>
        <IconBtn name="next" />
        <IconBtn name="last" />
        <IconBtn name="print" />
        <IconBtn name="exportImage" />
        <div className="flex w-[11px] justify-center">
          <Caret />
        </div>
        <IconBtn name="atlasSettings" />
      </div>
      <div className={`${barStyle} h-[38px]`}>
        <div className="w-[5px]" />
        <Handle />
        <div className="w-[2px]" />
        {["zoomIn", "zoomOut", "zoomActual", "zoomFull", "refresh"].map((n) => (
          <IconBtn key={n} name={n} />
        ))}
        <div className="w-[8px]" />
        <Handle />
        <div className="w-[4px]" />
        {["lock", "unlock", "group", "ungroup", "raise", "align", "distribute", "resize"].map((n) => (
          <IconBtn key={n} name={n} />
        ))}
      </div>
      <div className="flex h-[887px] shrink-0">
        <div className="flex h-full w-[40px] shrink-0 flex-col items-center border-r border-[#b5b5b5] bg-linear-to-r from-[#f9f9f9] to-[#ededed]">
          <div className="mb-[3px] mt-[5px] h-[5px] w-[18px] shrink-0 bg-[radial-gradient(circle,#b4b4b4_0.7px,transparent_1px)] bg-[length:3px_3px]" />
          {leftTools.map((n) => (
            <div
              key={n}
              className={`ml-px flex h-[32px] w-[32px] shrink-0 items-center justify-center ${n === "select" ? "rounded-[3px] border border-[#a9a9a9] bg-[#dadada]" : ""}`}
            >
              <Svg>{icons[n]}</Svg>
            </div>
          ))}
        </div>
        <div className="flex w-[1327px] shrink-0 flex-col border-b border-[#b5b5b5]">
          <HRuler />
          <div className="flex h-[864px]">
            <VRuler />
            <Canvas />
            <div className="flex w-[14px] shrink-0 flex-col border-l border-[#c2c2c2] bg-linear-to-r from-white to-[#f0f0f0]">
              <div className="flex h-[13px] items-center justify-center">
                <Caret up />
              </div>
              <div className="h-[40px] border-y border-[#bdbdbd] bg-[#e4e4e4]" />
              <div className="grow" />
              <div className="flex h-[14px] items-center justify-center border-t border-[#bdbdbd]">
                <Caret />
              </div>
            </div>
          </div>
        </div>
        <div className="flex w-[5px] shrink-0 items-center justify-center">
          <div className="h-[18px] w-[3px] bg-[radial-gradient(circle,#b4b4b4_0.7px,transparent_1px)] bg-[length:3px_3px]" />
        </div>
        <Panel />
      </div>
      <div className="flex min-h-0 grow items-center pl-[6px]">
        <div className="w-[1354px] pt-[2px]">1 item selected</div>
        <div className="w-[106px] pt-[2px] text-[13.3px]">x: 306.917 mm</div>
        <div className="w-[106px] pt-[2px] text-[13.3px]">y: 59.0021 mm</div>
        <div className="w-[106px] pt-[2px]">page: 1</div>
        <div className="flex h-[25px] w-[135px] rounded-[3px] border border-[#adadad] bg-white">
          <div className="grow pl-[3px] leading-[25px]">100.0%</div>
          <div className="flex w-[20px] items-center justify-center rounded-r-[3px] border-l border-[#b5b5b5] bg-linear-to-b from-[#fcfcfc] to-[#eeeeee]">
            <Caret />
          </div>
        </div>
        <div className="relative ml-[7px] h-[6px] w-[98px] rounded-[3px] border border-[#adadad] bg-[#d9d9d9]">
          <div className="h-full w-[12px] rounded-l-[3px] bg-[#3e9be0]" />
          <div className="absolute -top-[5px] left-[8px] h-[14px] w-[13px] rounded-[3px] border border-[#a5a5a5] bg-[#fafafa]" />
        </div>
      </div>
    </div>
  );
}
